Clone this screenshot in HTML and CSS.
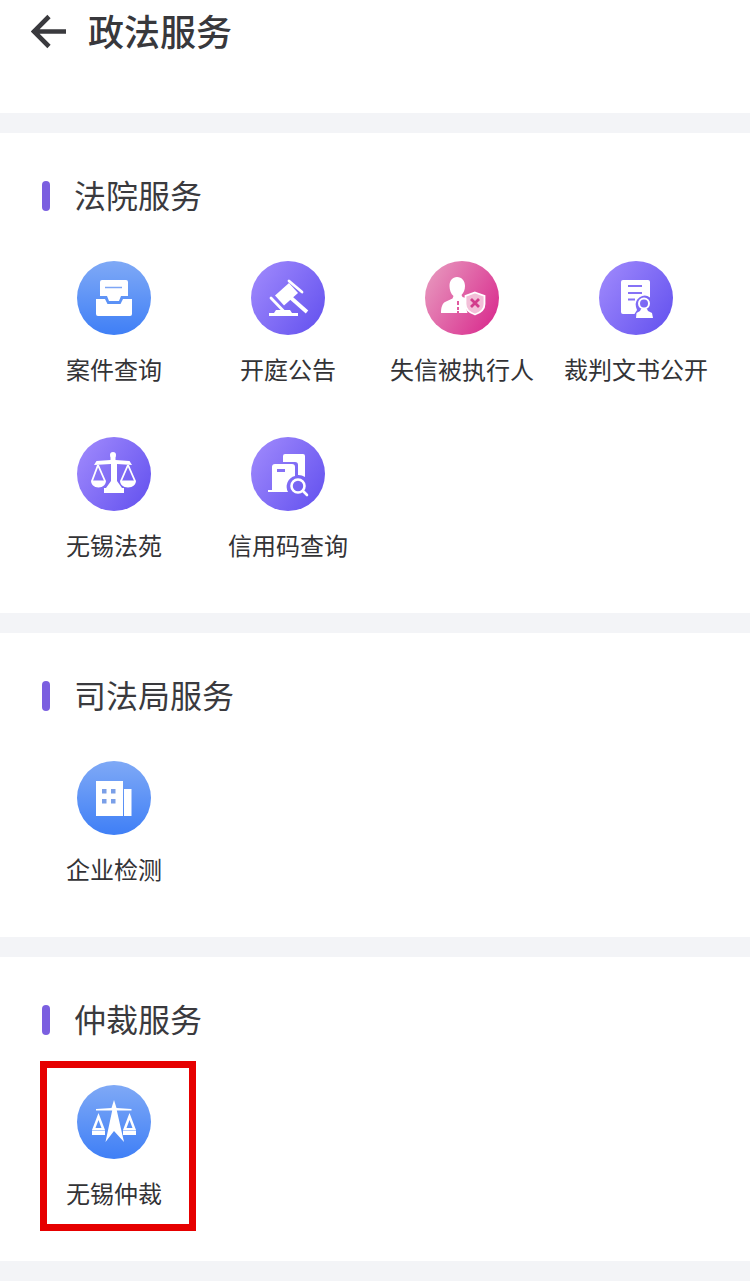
FILE: index.html
```html
<!DOCTYPE html>
<html lang="zh-CN">
<head>
<meta charset="utf-8">
<title>政法服务</title>
<link rel="stylesheet" href="styles.css">
</head>
<body>
<svg class="defs" width="0" height="0" aria-hidden="true">
  <defs>
    <linearGradient id="gBlue" x1="0" y1="0" x2="0" y2="1"><stop offset="0" stop-color="#7fa9f6"/><stop offset="1" stop-color="#3f7ff6"/></linearGradient>
    <linearGradient id="gPurple" x1="0" y1="0.15" x2="1" y2="0.85"><stop offset="0" stop-color="#9e88fc"/><stop offset="1" stop-color="#6553ef"/></linearGradient>
    <linearGradient id="gPink" x1="0" y1="0.2" x2="1" y2="0.8"><stop offset="0" stop-color="#e796bd"/><stop offset="1" stop-color="#d92c8e"/></linearGradient>
  </defs>
</svg>

<header class="topbar">
  <svg class="back" width="36" height="36" viewBox="0 0 36 36"><path d="M35 17.500H4M18 2.500 3 17.500l15 15" fill="none" stroke="#3a3a3e" stroke-width="4.600"/></svg>
  <h1 class="page-title">政法服务</h1>
</header>

<section class="panel">
  <h2 class="panel-title">法院服务</h2>
  <div class="grid">
    <div class="item">
      <svg class="icon" viewBox="0 0 74 74"><circle cx="37" cy="37" r="37" fill="url(#gBlue)"/>
        <path fill="#fff" d="M23 21a2 2 0 0 1 2-2h24a2 2 0 0 1 2 2v14h-7l-2 5H32l-2-5h-7z"/>
        <path fill="#fff" d="M19 38h9l2.500 5h13l2.500-5h9v15a2 2 0 0 1-2 2H21a2 2 0 0 1-2-2z"/>
        <path stroke="#7ea6f5" stroke-width="1.500" d="M28 26.500h17"/></svg>
      <span class="label">案件查询</span>
    </div>
    <div class="item">
      <svg class="icon" viewBox="0 0 74 74"><circle cx="37" cy="37" r="37" fill="url(#gPurple)"/>
        <path fill="#fff" d="M24 34.500 38 22l9 10-14 12.500z"/>
        <path stroke="#fff" stroke-width="2.800" stroke-linecap="round" d="M20 37l13.500 14M38 20l13 11"/>
        <path stroke="#fff" stroke-width="3.800" d="M39 36l17 15"/>
        <path fill="#fff" d="M25 49h14l2 3h6v3H18v-3h5z"/></svg>
      <span class="label">开庭公告</span>
    </div>
    <div class="item">
      <svg class="icon" viewBox="0 0 74 74"><circle cx="37" cy="37" r="37" fill="url(#gPink)"/>
        <path fill="#fff" d="M32 16c5 0 8 4 8 9 0 4-1.500 7-3.500 9l1 2 3 1v8l2 7H16c0-5 1-9 4-11l7.500-3.500 1-2.500c-2.500-2-4-6-4-10 0-5.500 3-9 7.500-9z"/>
        <path fill="#e05a9f" d="M34 40h-2v4h2zM34 46h-2v3h2zM34 50h-2v2h2z"/>
        <path fill="#f3bfd8" stroke="#fff" stroke-width="1.800" d="M50 31.500l9.500 3.500V43c0 4.500-3.500 8.500-9.500 10.500-6-2-9.500-6-9.500-10.500v-8z"/>
        <path stroke="#d23d8c" stroke-width="2.800" d="M46 38l8 8M54 38l-8 8"/></svg>
      <span class="label">失信被执行人</span>
    </div>
    <div class="item">
      <svg class="icon" viewBox="0 0 74 74"><circle cx="37" cy="37" r="37" fill="url(#gPurple)"/>
        <path fill="#fff" d="M24 19h25a2 2 0 0 1 2 2v15.500a9 9 0 0 0-14 9.500l1 3-2.500 4H24a2 2 0 0 1-2-2V21a2 2 0 0 1 2-2z"/>
        <path stroke="#8672f6" stroke-width="2" d="M29 25h14M29 32h14M29 38.500h7"/>
        <circle cx="45" cy="42.500" r="5" fill="none" stroke="#fff" stroke-width="2"/>
        <path fill="#fff" d="M42 48h6l1 2 4 2 1 5H37l.500-5 3.500-2z"/></svg>
      <span class="label">裁判文书公开</span>
    </div>
    <div class="item">
      <svg class="icon" viewBox="0 0 74 74"><circle cx="37" cy="37" r="37" fill="url(#gPurple)"/>
        <circle cx="36" cy="18" r="3" fill="#fff"/>
        <path fill="#fff" d="M33.500 19h5v4l14 1 2.500 4-15-1V44l5 7h2v5H27v-5h2l5-7V27l-17 1 2.500-4 14-1z"/>
        <path fill="none" stroke="#fff" stroke-width="1.800" d="M21 28 15 44M21 28l7 16M51 28l-7 16M51 28l7 16"/>
        <path fill="#fff" d="M14 43.500h15c0 4-3 7-7.500 7S14 47.500 14 43.500zM43 43.500h16c0 4-3 7-8 7s-8-3-8-7z"/></svg>
      <span class="label">无锡法苑</span>
    </div>
    <div class="item">
      <svg class="icon" viewBox="0 0 74 74"><circle cx="37" cy="37" r="37" fill="url(#gPurple)"/>
        <path fill="#fff" d="M32 19a2 2 0 0 1 2-2h18a2 2 0 0 1 2 2v21a12 12 0 0 0-7-2V28a3 3 0 0 0-3-3h-12z"/>
        <path fill="#fff" d="M24 27h17a3 3 0 0 1 3 3v9a11 11 0 0 0-7 16H17v-2h4V30a3 3 0 0 1 3-3z"/>
        <path stroke="#8672f6" stroke-width="3" d="M26 33.500h8"/>
        <circle cx="47" cy="49" r="6.500" fill="none" stroke="#fff" stroke-width="2.600"/>
        <path stroke="#fff" stroke-width="2.600" stroke-linecap="round" d="M52 54l4 4"/></svg>
      <span class="label">信用码查询</span>
    </div>
  </div>
</section>

<section class="panel">
  <h2 class="panel-title">司法局服务</h2>
  <div class="grid">
    <div class="item">
      <svg class="icon" viewBox="0 0 74 74"><circle cx="37" cy="37" r="37" fill="url(#gBlue)"/>
        <path fill="#fff" d="M19 20h27v35H19zM47 28h7.500v27H47z"/>
        <path fill="#7a9fe8" d="M25 28h4.500v4.500H25zM34 28h4.500v4.500H34zM25 38h4.500v4.500H25zM34 38h4.500v4.500H34z"/></svg>
      <span class="label">企业检测</span>
    </div>
  </div>
</section>

<section class="panel">
  <h2 class="panel-title">仲裁服务</h2>
  <div class="grid">
    <div class="item">
      <svg class="icon" viewBox="0 0 74 74"><circle cx="37" cy="37" r="37" fill="url(#gBlue)"/>
        <path fill="#fff" d="M37 15l2.500 8 15 1v1.500H39.800L47 57 37 46 28.500 57l6.700-31.500H19V24l15.500-1z"/>
        <path fill="#fff" fill-rule="evenodd" d="M21.500 28 28 45H15zM21.500 35 18.500 43h6zM15 45.500h13V50H15zM52.500 28 59 45H46zM52.500 35l-3 8h6zM46 45.500h13V50H46z"/></svg>
      <span class="label">无锡仲裁</span>
      <div class="highlight"></div>
    </div>
  </div>
</section>
</body>
</html>
```

FILE: styles.css
```css
* {
  box-sizing: border-box;
}

html,
body {
  margin: 0;
  padding: 0;
}

body {
  width: 750px;
  height: 1281px;
  overflow: hidden;
  background: #f3f4f7;
  font-family: "Noto Sans CJK SC", "Noto Sans", sans-serif;
  color: #333336;
}

.defs {
  display: block;
  height: 0;
}

.topbar {
  height: 113px;
  background: #fff;
  display: flex;
  align-items: flex-start;
  padding: 14px 0 0 31px;
}

.back {
  display: block;
}

.page-title {
  margin: -6px 0 0 21px;
  font-size: 36px;
  line-height: 44px;
  font-weight: 500;
  color: #38383c;
}

.panel {
  margin-top: 20px;
  background: #fff;
  padding-top: 43px;
}

.panel-title {
  margin: 0;
  height: 40px;
  padding-left: 42px;
  display: flex;
  align-items: flex-start;
  gap: 24px;
  font-size: 32px;
  line-height: 36px;
  font-weight: 400;
  color: #3a3a3e;
}

.panel-title::before {
  content: "";
  width: 8px;
  height: 30px;
  margin-top: 5px;
  border-radius: 4px;
  background: #7b5fe0;
}

.grid {
  margin-top: 45px;
  padding-left: 27px;
  display: grid;
  grid-template-columns: repeat(4, 174px);
  grid-auto-rows: 176px;
}

.item {
  position: relative;
  display: flex;
  flex-direction: column;
  align-items: center;
}

.icon {
  display: block;
  width: 74px;
  height: 74px;
}

.label {
  margin-top: 18px;
  font-size: 24px;
  line-height: 32px;
  white-space: nowrap;
  color: #333336;
}

.highlight {
  position: absolute;
  left: 13px;
  top: -24px;
  width: 156px;
  height: 170px;
  border: 7px solid #e60000;
}
```
